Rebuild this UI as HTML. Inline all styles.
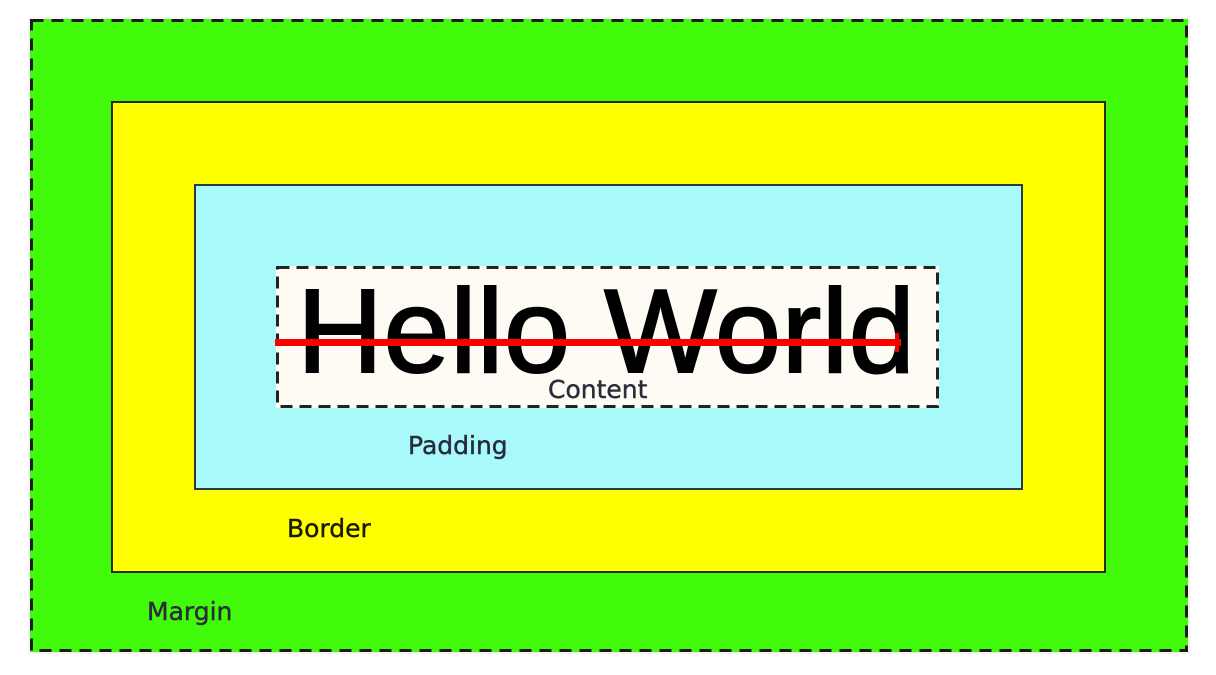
<!DOCTYPE html>
<html><head><style>
body{margin:0;width:1216px;height:675px;background:#fff;position:relative;overflow:hidden;font-family:"Liberation Sans",sans-serif}
div,svg{position:absolute;box-sizing:border-box}
.l{font-family:"DejaVu Sans","Liberation Sans",sans-serif;font-size:25px;color:#2a2a3a;line-height:1;-webkit-text-stroke:0.4px currentColor}
</style></head><body>
<div style="left:28px;top:17px;width:1162px;height:637px;background:#f4f4f4"></div>
<div style="left:30px;top:19px;width:1158px;height:633px;background:#42fb0b"></div>
<div style="left:111px;top:101px;width:995px;height:472px;background:#ffff00;border:2px solid #2a2a1a"></div>
<div style="left:194px;top:184px;width:829px;height:306px;background:#a8fafa;border:2px solid #2a3a4a"></div>
<div style="left:276px;top:266px;width:663px;height:142px;background:#fdfbf4"></div>
<svg style="left:0;top:0" width="1216" height="675">
<rect x="31.5" y="20.5" width="1155" height="630" fill="none" stroke="#1b1b1b" stroke-width="3" stroke-dasharray="12 8"/>
<rect x="277.5" y="267.5" width="660" height="139" fill="none" stroke="#222" stroke-width="3" stroke-dasharray="12 7"/>
</svg>
<div style="left:297px;top:272px;font-size:119px;line-height:1;color:#000;letter-spacing:0.5px;white-space:nowrap;-webkit-text-stroke:2px #000">Hello World</div>
<div style="left:275px;top:339px;width:626px;height:7px;background:#f00"></div>
<div style="left:895px;top:333px;width:4px;height:19px;background:#e00"></div>
<div class="l" style="left:548px;top:377px">Content</div>
<div class="l" style="left:408px;top:433px">Padding</div>
<div class="l" style="left:287px;top:516px;color:#1a1a00">Border</div>
<div class="l" style="left:147px;top:599px">Margin</div>
</body></html>
